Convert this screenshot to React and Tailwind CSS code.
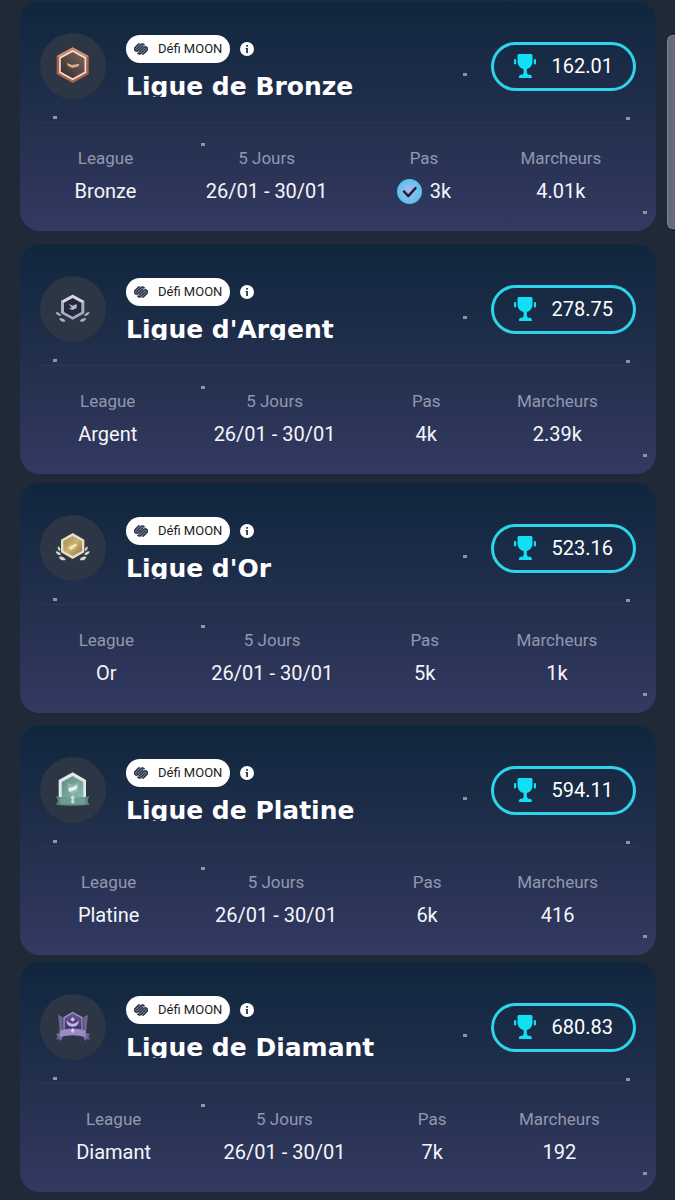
import { SiSquarespace } from 'react-icons/si';

const stats = (league, steps, walkers, done = false) => ({ league, steps, walkers, done });

const challenges = [
    { title: 'Ligue de Bronze', amount: '162.01', Badge: BronzeBadge, spacing: 'mt-px', ...stats('Bronze', '3k', '4.01k', true) },
    { title: "Ligue d'Argent", amount: '278.75', Badge: SilverBadge, spacing: 'mt-[13px]', ...stats('Argent', '4k', '2.39k') },
    { title: "Ligue d'Or", amount: '523.16', Badge: GoldBadge, spacing: 'mt-[9px]', ...stats('Or', '5k', '1k') },
    { title: 'Ligue de Platine', amount: '594.11', Badge: PlatinumBadge, spacing: 'mt-3', ...stats('Platine', '6k', '416') },
    { title: 'Ligue de Diamant', amount: '680.83', Badge: DiamondBadge, spacing: 'mt-[7px]', ...stats('Diamant', '7k', '192') },
];

function BronzeBadge() {
    return (
        <svg viewBox="0 0 198 198" className="size-full" aria-hidden="true">
            <defs>
                <linearGradient id="bronze-fill" x1="0" y1="1" x2="1" y2="0">
                    <stop offset="0" stopColor="#2f2a2c" />
                    <stop offset="1" stopColor="#80675b" />
                </linearGradient>
            </defs>
            <path d="M98 43 146 69v54l-48 27-48-27V69z" fill="#a9654f" />
            <path d="M98 43 146 69 98 96 50 69z" fill="#c98c76" />
            <path d="m98 54 38 21v43l-38 21-38-21V75z" fill="url(#bronze-fill)" stroke="#f8dccb" strokeWidth="5" />
            <path d="m81 90 15 6 22-4-2 8-19 5-14-7z" fill="#dda88f" />
        </svg>
    );
}

function SilverBadge() {
    return (
        <svg viewBox="0 0 198 198" className="size-full" aria-hidden="true">
            <path d="m98 56 35 19v37l-35 19-35-19V75z" fill="#a9adbd" />
            <path d="m98 56 35 19-35 19-35-19z" fill="#d6d8e1" />
            <path d="m98 66 26 14v28l-26 14-26-14V80z" fill="#25263f" />
            <path d="m86 84 12 5 12-5v12l-12 6-12-4 9-3z" fill="#b9bccb" />
            <g fill="#aeb4c1">
                <path d="M47 108c8 0 14 4 17 12-9 0-15-4-17-12ZM57 127c9-2 16 1 20 9-9 3-16 1-20-9Z" />
                <path d="M149 108c-8 0-14 4-17 12 9 0 15-4 17-12ZM139 127c-9-2-16 1-20 9 9 3 16 1 20-9Z" />
            </g>
        </svg>
    );
}

function GoldBadge() {
    return (
        <svg viewBox="0 0 198 198" className="size-full" aria-hidden="true">
            <defs>
                <linearGradient id="gold-fill" x1="0" y1="0" x2="1" y2="1">
                    <stop offset="0" stopColor="#a68a4b" />
                    <stop offset=".5" stopColor="#c9b272" />
                    <stop offset="1" stopColor="#96793f" />
                </linearGradient>
            </defs>
            <path d="m98 54 35 20v38l-35 20-35-20V74z" fill="#e7dfc8" />
            <path d="m98 63 28 15v30l-28 15-28-15V78z" fill="url(#gold-fill)" />
            <path d="m85 96 17-8 10-1-5 9-10 2 8 1-13 6-5-5z" fill="#f2e5b8" />
            <g fill="#d9d6c9">
                <path d="M54 94c7 4 9 9 6 15-6-4-9-9-6-15ZM47 109c9 0 14 4 16 11-9 1-15-3-16-11ZM57 125c10-2 17 2 20 10-10 3-18 0-20-10Z" />
                <path d="M142 94c-7 4-9 9-6 15 6-4 9-9 6-15ZM149 109c-9 0-14 4-16 11 9 1 15-3 16-11ZM139 125c-10-2-17 2-20 10 10 3 18 0 20-10Z" />
            </g>
        </svg>
    );
}

function PlatinumBadge() {
    return (
        <svg viewBox="0 0 198 198" className="size-full" aria-hidden="true">
            <defs>
                <linearGradient id="platinum-fill" x1="0" y1="0" x2="1" y2="1">
                    <stop offset="0" stopColor="#5d8d84" />
                    <stop offset="1" stopColor="#8fb9ac" />
                </linearGradient>
            </defs>
            <path d="m98 46 40 23v54H56V69z" fill="#e3e9e9" />
            <path d="m98 57 32 18v48H65V75z" fill="url(#platinum-fill)" />
            <path d="m83 77 15 7 16-7v25l-16 11-15-11z" fill="#8fbcb0" />
            <path d="m85 94 14-4 14-6-3 12-12 6-10 2z" fill="#e7f2ee" />
            <path d="M48 118c34 6 66 6 100 0l-5 12 5 13c-34 4-66 4-100 0l6-12z" fill="#55857b" />
            <path d="M60 120c26 4 50 4 76 0v21c-26 3-50 3-76 0z" fill="#6d9d92" />
            <path d="m98 114 7 8-4 6 3 7-6 5-6-5 4-7-5-6z" fill="#c4ded6" />
        </svg>
    );
}

function DiamondBadge() {
    return (
        <svg viewBox="0 0 198 198" className="size-full" aria-hidden="true">
            <defs>
                <linearGradient id="diamond-fill" x1="0" y1="0" x2="0" y2="1">
                    <stop offset="0" stopColor="#69579b" />
                    <stop offset="1" stopColor="#3c2f69" />
                </linearGradient>
            </defs>
            <path d="m54 62 14 8v40l-8 8zM144 62l-14 8v40l8 8z" fill="#6d668c" />
            <path d="m98 53 30 17v40H70V70z" fill="#9d90c4" />
            <path d="m98 58 26 15v37H74V73z" fill="url(#diamond-fill)" />
            <path d="m98 70 7 6-7 7-7-7z" fill="#d2c8ec" />
            <path d="M80 78c5 8 11 11 18 11s13-3 18-11c1 13-6 20-18 20s-19-7-18-20Z" fill="#c3b5e3" />
            <path d="m48 120 15-4 5 16-6 9-5-6-9 2 5-9zM150 120l-15-4-5 16 6 9 5-6 9 2-5-9z" fill="#75649f" />
            <path d="M59 110c26-9 52-9 78 0v20c-26-8-52-8-78 0z" fill="#9c89c7" />
            <path d="m98 102 6 7-6 8-6-7z" fill="#d9d0ef" />
        </svg>
    );
}

function InfoIcon() {
    return (
        <svg viewBox="0 0 14 14" className="size-3.5" aria-hidden="true">
            <circle cx="7" cy="7" r="7" fill="#fff" />
            <path d="M6.200 3h1.700v1.700H6.200zM5.600 6h2.300v5H6.200V7.100h-.6z" fill="#1b2c48" />
        </svg>
    );
}

function TrophyIcon() {
    return (
        <svg viewBox="0 0 22 24" className="h-6 w-[22px]" fill="#12dff3" aria-hidden="true">
            <path d="M5.200 0h11.600c1 0 1.700.7 1.700 1.600v5.600c0 4-2.200 6.800-5.600 7.800-.4 2.800 0 4.700 1.300 5.700h1.500c1 0 1.500.4 1.500.9s.8.700.8 1.400c0 .6-.4 1-1 1H5.800c-.6 0-1-.4-1-1 0-.7.8-.9.8-1.400s.5-.9 1.500-.9h1.400c1.300-1 1.500-2.900.9-5.700-3.500-1-5.900-3.800-5.900-7.800V1.600C3.500.7 4.200 0 5.200 0Z" />
            <rect x="0" y="5" width="2.200" height="5.400" rx="1" />
            <rect x="19.800" y="5" width="2.200" height="5.400" rx="1" />
        </svg>
    );
}

function CheckIcon() {
    return (
        <svg viewBox="0 0 25 25" className="size-[25px]" role="img" aria-label="Validé">
            <defs>
                <radialGradient id="check-fill">
                    <stop offset="0" stopColor="#b3b5f3" />
                    <stop offset=".5" stopColor="#8abcf0" />
                    <stop offset="1" stopColor="#55c3e8" />
                </radialGradient>
            </defs>
            <circle cx="12.500" cy="12.500" r="12.500" fill="url(#check-fill)" />
            <path d="m7 12.500 4.300 4.600 7.200-8" fill="none" stroke="#1c2342" strokeWidth="2.500" strokeLinecap="round" strokeLinejoin="round" />
        </svg>
    );
}

function Stars() {
    const star = 'absolute h-[3px] w-1 bg-[#8d94a5]';

    return (
        <div className="pointer-events-none absolute inset-0" aria-hidden="true">
            <span className={`${star} left-[33px] top-[115px]`} />
            <span className={`${star} left-[181px] top-[142px]`} />
            <span className={`${star} right-[189px] top-[72px]`} />
            <span className={`${star} right-[26px] top-[116px]`} />
            <span className={`${star} right-[9px] top-[210px]`} />
        </div>
    );
}

function Stat({ label, children }) {
    return (
        <div className="flex flex-col items-center gap-[7px]">
            <dt className="text-[17px] leading-6 text-[#9298ae]">{label}</dt>
            <dd className="flex items-center gap-2 text-xl leading-7 text-[#f5f6fa]">{children}</dd>
        </div>
    );
}

function LeagueCard({ challenge }) {
    const { title, amount, Badge, spacing, league, steps, walkers, done } = challenge;

    return (
        <article className={`relative rounded-[20px] bg-linear-to-b from-[#10263d] via-[#212f4d] to-[#343961] px-5 pt-8 pb-[26px] ${spacing}`}>
            <Stars />

            <div className="flex items-center">
                <div className="size-[66px] shrink-0 rounded-full bg-[#2c3644]">
                    <Badge />
                </div>

                <div className="ml-5 min-w-0 flex-1">
                    <div className="flex items-center gap-2.5">
                        <span className="flex h-7 items-center gap-2.5 rounded-full bg-white px-2 text-[13px] text-[#1b1d24]">
                            <SiSquarespace className="size-3.5 stroke-1 text-[#27324a]" aria-hidden="true" />
                            Défi MOON
                        </span>
                        <button type="button" aria-label={`Informations ${title}`}>
                            <InfoIcon />
                        </button>
                    </div>
                    <h2 className="mt-1.5 h-7 overflow-hidden font-['DejaVu_Sans',sans-serif] text-[25px] leading-9 font-bold whitespace-nowrap text-white">
                        {title}
                    </h2>
                </div>

                <button type="button" className="flex h-[49px] shrink-0 items-center gap-4 rounded-full border-3 border-[#2cd5e9] px-5 text-xl text-white">
                    <TrophyIcon />
                    {amount}
                </button>
            </div>

            <dl className="mt-[23px] flex justify-around border-t border-[#2d3848] pt-[23px]">
                <Stat label="League">{league}</Stat>
                <Stat label="5 Jours">26/01 - 30/01</Stat>
                <Stat label="Pas">
                    {done && <CheckIcon />}
                    {steps}
                </Stat>
                <Stat label="Marcheurs">{walkers}</Stat>
            </dl>
        </article>
    );
}

export default function App() {
    return (
        <main className="relative flex min-h-screen flex-col bg-[#1f2937] pr-[19px] pl-5 font-[Roboto,sans-serif]">
            {challenges.map((challenge) => (
                <LeagueCard key={challenge.title} challenge={challenge} />
            ))}

            {/* scroll thumb */}
            <div className="absolute top-[35px] right-0 h-[194px] w-2 rounded-l-md border border-r-0 border-[#7b8290] bg-[#646a78]" aria-hidden="true" />
        </main>
    );
}
